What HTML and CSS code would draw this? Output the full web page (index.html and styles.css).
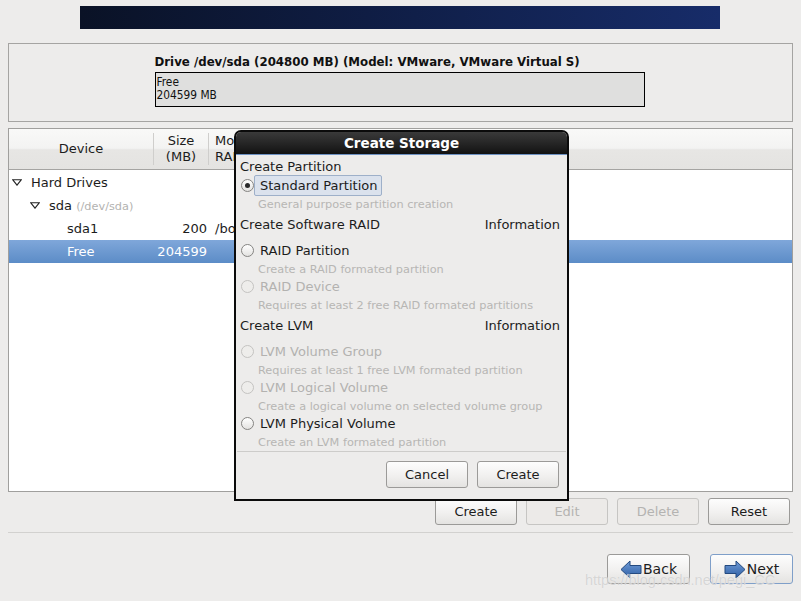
FILE: index.html
```html
<!DOCTYPE html>
<html lang="en">
<head>
    <meta charset="UTF-8">
    <title>Partitioning</title>
    <link rel="stylesheet" href="styles.css">
</head>
<body>

<div class="banner"></div>

<div class="drive-panel">
    <div class="drive-inner">
        <div class="drive-title">Drive /dev/sda (204800 MB) (Model: VMware, VMware Virtual S)</div>
        <div class="drive-bar">
            <div>Free</div>
            <div>204599 MB</div>
        </div>
    </div>
</div>

<div class="tree">
    <div class="tree-head">
        <div class="col col-device">Device</div>
        <div class="col col-size">Size<br>(MB)</div>
        <div class="col col-mount">Mount Point/<br>RAID/Volume</div>
        <div class="col col-rest"></div>
    </div>
    <div class="tree-row">
        <div class="cell lvl0"><span class="expander"></span>Hard Drives</div>
        <div class="cell num"></div>
        <div class="cell"></div>
        <div class="cell"></div>
    </div>
    <div class="tree-row">
        <div class="cell lvl1"><span class="expander"></span>sda <span class="dim">(/dev/sda)</span></div>
        <div class="cell num"></div>
        <div class="cell"></div>
        <div class="cell"></div>
    </div>
    <div class="tree-row">
        <div class="cell lvl2">sda1</div>
        <div class="cell num">200</div>
        <div class="cell mount">/boot</div>
        <div class="cell"></div>
    </div>
    <div class="tree-row selected">
        <div class="cell lvl2">Free</div>
        <div class="cell num">204599</div>
        <div class="cell"></div>
        <div class="cell"></div>
    </div>
</div>

<div class="actions">
    <button class="btn">Create</button>
    <button class="btn" disabled>Edit</button>
    <button class="btn" disabled>Delete</button>
    <button class="btn">Reset</button>
</div>

<div class="divider"></div>

<div class="nav">
    <button class="btn nav-btn">
        <svg width="22" height="19" viewBox="0 0 22 19"><defs><linearGradient id="ab" x1="0" y1="0" x2="0" y2="1"><stop offset="0" stop-color="#6f9bd6"/><stop offset="1" stop-color="#2f5fa5"/></linearGradient></defs><path d="M1 9.5 L10 1 L10 5.5 L21 5.5 L21 13.5 L10 13.5 L10 18 Z" fill="url(#ab)" stroke="#23497f" stroke-width="1" stroke-linejoin="round"/></svg>
        Back
    </button>
    <button class="btn nav-btn default">
        <svg width="22" height="19" viewBox="0 0 22 19"><defs><linearGradient id="an" x1="0" y1="0" x2="0" y2="1"><stop offset="0" stop-color="#6f9bd6"/><stop offset="1" stop-color="#2f5fa5"/></linearGradient></defs><path d="M21 9.5 L12 1 L12 5.5 L1 5.5 L1 13.5 L12 13.5 L12 18 Z" fill="url(#an)" stroke="#23497f" stroke-width="1" stroke-linejoin="round"/></svg>
        Next
    </button>
</div>

<div class="watermark">https://blog.csdn.net/pegi_CC</div>

<!-- Create Storage dialog -->
<div class="dialog">
    <div class="dialog-title">Create Storage</div>
    <div class="dialog-body">
        <div class="section first"><span>Create Partition</span></div>
        <div class="option">
            <span class="radio checked"></span>
            <span class="label focused">Standard Partition</span>
        </div>
        <div class="desc">General purpose partition creation</div>

        <div class="section"><span>Create Software RAID</span><span>Information</span></div>
        <div class="option">
            <span class="radio"></span>
            <span class="label">RAID Partition</span>
        </div>
        <div class="desc">Create a RAID formated partition</div>
        <div class="option disabled">
            <span class="radio"></span>
            <span class="label">RAID Device</span>
        </div>
        <div class="desc">Requires at least 2 free RAID formated partitions</div>

        <div class="section"><span>Create LVM</span><span>Information</span></div>
        <div class="option disabled">
            <span class="radio"></span>
            <span class="label">LVM Volume Group</span>
        </div>
        <div class="desc">Requires at least 1 free LVM formated partition</div>
        <div class="option disabled">
            <span class="radio"></span>
            <span class="label">LVM Logical Volume</span>
        </div>
        <div class="desc">Create a logical volume on selected volume group</div>
        <div class="option">
            <span class="radio"></span>
            <span class="label">LVM Physical Volume</span>
        </div>
        <div class="desc">Create an LVM formated partition</div>
    </div>
    <div class="dialog-sep"></div>
    <div class="dialog-buttons">
        <button class="btn">Cancel</button>
        <button class="btn">Create</button>
    </div>
</div>

</body>
</html>
```

FILE: styles.css
```css
* {
    box-sizing: border-box;
}

body {
    margin: 0;
    width: 801px;
    height: 601px;
    overflow: hidden;
    position: relative;
    background-color: #edeceb;
    font-family: 'DejaVu Sans', 'Liberation Sans', sans-serif;
    font-size: 13px;
    color: #1c1c1c;
}

.banner {
    margin: 6px 81px 0 80px;
    height: 23px;
    background: linear-gradient(90deg, #0a1226 0%, #0f1d44 45%, #172c69 100%);
}

.drive-panel {
    margin: 14px 8px 0;
    height: 79px;
    border: 1px solid #a5a4a2;
    display: flex;
    justify-content: center;
}

.drive-inner {
    width: 490px;
    margin-left: -2px;
}

.drive-title {
    padding-top: 10px;
    height: 28px;
    line-height: 16px;
    font-family: 'DejaVu Sans Condensed', 'DejaVu Sans', sans-serif;
    font-stretch: condensed;
    font-weight: bold;
    font-size: 13.1px;
    color: #111;
}

.drive-bar {
    height: 35px;
    border: 1px solid #000;
    background-color: #dfdfde;
    padding: 3px 0 0 1px;
    font-family: 'DejaVu Sans Condensed', 'DejaVu Sans', sans-serif;
    font-stretch: condensed;
    font-size: 11.8px;
    line-height: 13px;
    color: #111;
}

.tree {
    margin: 6px 8px 0;
    height: 364px;
    border: 1px solid #a09f9d;
    background-color: #fff;
}

.tree-head,
.tree-row {
    display: grid;
    grid-template-columns: 145px 55px 25px 1fr;
}

.tree-head {
    height: 41px;
    border-bottom: 1px solid #a5a4a2;
    background: linear-gradient(#f9f9f8 0%, #f3f3f2 48%, #e7e6e4 52%, #e4e3e1 100%);
}

.col {
    display: flex;
    align-items: center;
    line-height: 16px;
    margin: 4px 0;
    border-right: 1px solid #cfcecc;
}

.col-device {
    justify-content: center;
}

.col-size {
    justify-content: center;
    text-align: center;
}

.col-mount {
    padding-left: 6px;
    border-right: none;
    white-space: nowrap;
    overflow: hidden;
}

.col-rest {
    border-right: none;
}

.tree-row {
    height: 23px;
    line-height: 23px;
}

.tree-head + .tree-row {
    margin-top: 1px;
}

.tree-row.selected {
    background: linear-gradient(#7fa7da, #5c8cc7);
    color: #fff;
}

.cell {
    white-space: nowrap;
    overflow: hidden;
}

.lvl0 {
    padding-left: 3px;
}

.lvl1 {
    padding-left: 21px;
}

.lvl2 {
    padding-left: 58px;
}

.num {
    text-align: right;
    padding-right: 2px;
}

.mount {
    padding-left: 6px;
}

.dim {
    color: #b3b3b1;
    font-size: 11.3px;
}

.expander {
    display: inline-block;
    width: 10px;
    height: 7px;
    margin: 0 9px 2px 0;
    vertical-align: middle;
    background: url("data:image/svg+xml;utf8,<svg xmlns='http://www.w3.org/2000/svg' width='10' height='7'><path d='M0.8 0.8 L9.2 0.8 L5 6.2 Z' fill='none' stroke='%23222' stroke-width='1.1'/></svg>") no-repeat;
}

.btn {
    font-family: 'DejaVu Sans', sans-serif;
    font-size: 13px;
    color: #1c1c1c;
    width: 82px;
    height: 27px;
    padding: 0;
    border: 1px solid #9b9a98;
    border-radius: 3px;
    background: linear-gradient(#fdfdfd 0%, #f1f0ef 55%, #e4e3e1 100%);
}

.btn:disabled {
    color: #b4b3b1;
    border-color: #c6c5c3;
    background: #eceae8;
}

.actions {
    display: flex;
    justify-content: flex-end;
    gap: 9px;
    margin-top: 6px;
    padding-right: 11px;
}

.divider {
    margin: 7px 8px 0;
    height: 1px;
    background-color: #d2d1cf;
}

.nav {
    display: flex;
    justify-content: flex-end;
    gap: 20px;
    margin-top: 21px;
    padding-right: 8px;
}

.nav-btn {
    width: 83px;
    height: 30px;
    font-size: 14px;
    display: flex;
    align-items: center;
    justify-content: center;
    gap: 1px;
}

.nav-btn.default {
    border-color: #7f9fc9;
}

.watermark {
    position: absolute;
    left: 585px;
    top: 572px;
    font-family: 'Liberation Sans', sans-serif;
    font-size: 14.5px;
    color: rgba(205, 205, 205, 0.8);
    text-shadow: 0 0 1px rgba(255, 255, 255, 0.7);
    pointer-events: none;
}

/* dialog over the tree */
.dialog {
    position: absolute;
    left: 234px;
    top: 130px;
    width: 335px;
    height: 371px;
    border: 2px solid #0b0b0b;
    border-radius: 7px 7px 0 0;
    background-color: #edeceb;
}

.dialog-title {
    height: 23px;
    line-height: 22px;
    border-radius: 5px 5px 0 0;
    background: linear-gradient(#3a3a3a, #121212);
    border-bottom: 1px solid #6d91c2;
    color: #fff;
    font-weight: bold;
    font-size: 13.5px;
    text-align: center;
}

.dialog-body {
    padding: 0 7px 0 4px;
}

.section {
    display: flex;
    justify-content: space-between;
    line-height: 16px;
    padding: 5px 0 8px;
}

.section.first {
    padding: 4px 0 1px;
}

.option {
    display: flex;
    align-items: center;
    height: 18px;
}

.radio {
    width: 13px;
    height: 13px;
    margin-left: 1px;
    border-radius: 50%;
    border: 1px solid #858482;
    background: linear-gradient(#ffffff, #e3e2e0);
    position: relative;
}

.radio.checked::after {
    content: "";
    position: absolute;
    left: 3px;
    top: 3px;
    width: 5px;
    height: 5px;
    border-radius: 50%;
    background-color: #2a2a2a;
}

.label {
    margin-left: 6px;
}

.label.focused {
    margin-left: 0;
    padding: 0 4px 0 5px;
    height: 21px;
    line-height: 19px;
    border: 1px solid #9eb0c9;
    border-radius: 2px;
    background-color: #dbe2ed;
}

.option.disabled .label {
    color: #b3b2b0;
}

.option.disabled .radio {
    border-color: #c4c3c1;
    background: #eeedeb;
}

.desc {
    padding: 3px 0 0 18px;
    line-height: 15px;
    height: 18px;
    font-size: 11.3px;
    color: #b7b6b4;
    white-space: nowrap;
}

.dialog-sep {
    margin: 1px 1px 0;
    height: 1px;
    background-color: #cdccca;
}

.dialog-buttons {
    display: flex;
    justify-content: flex-end;
    gap: 9px;
    margin-top: 9px;
    padding-right: 8px;
}
```
